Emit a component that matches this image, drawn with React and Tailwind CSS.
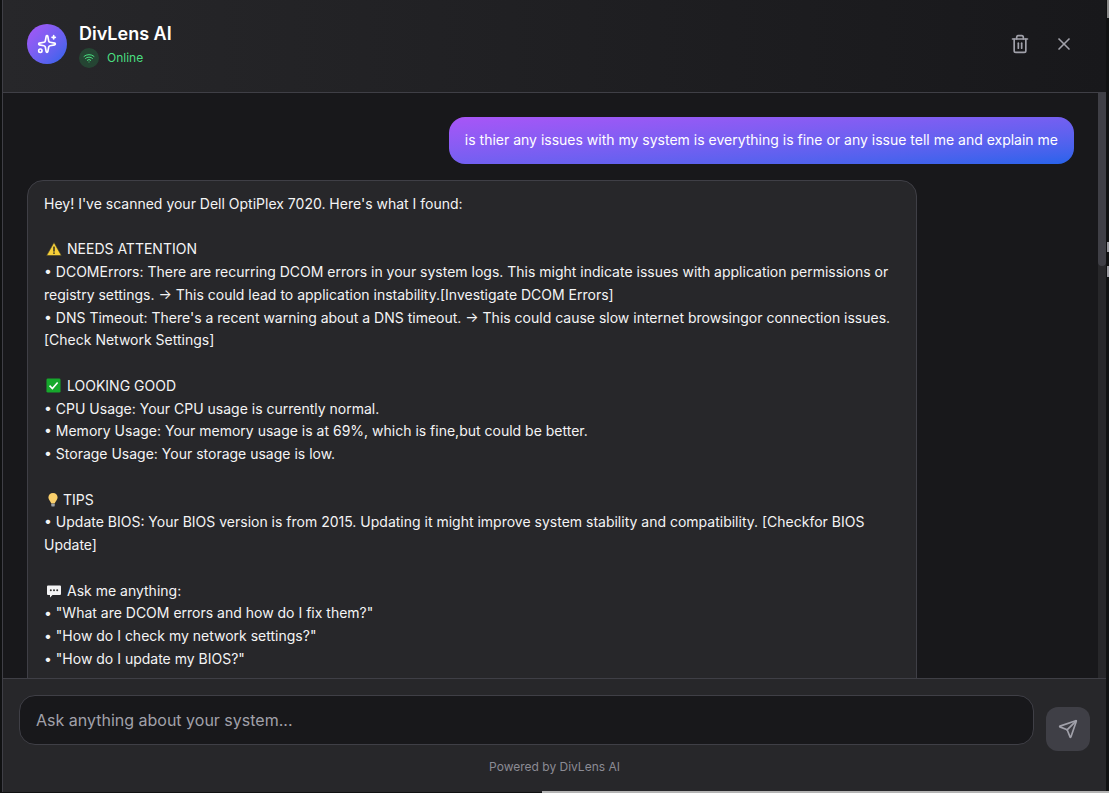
import React from "react";
import { Trash2, X, Send, Wifi, Sparkles } from "lucide-react";

const Warn = () => (
  <svg viewBox="0 0 16 16" className="inline-block w-[16px] h-[16px] align-[-3px] ml-[2px] mr-[5px]">
    <path d="M8 1.5 15.4 14.6H.6Z" fill="#f7d038" stroke="#3a3a2a" strokeWidth=".6" strokeLinejoin="round" />
    <rect x="7.3" y="5.6" width="1.4" height="5" fill="#222" />
    <rect x="7.3" y="11.4" width="1.4" height="1.5" fill="#222" />
  </svg>
);
const Check = () => (
  <svg viewBox="0 0 16 16" className="inline-block w-[15px] h-[15px] align-[-2px] ml-[2px] mr-[6px]">
    <rect x=".5" y=".5" width="15" height="15" rx="1.5" fill="#16a82c" />
    <path d="M3.8 8.2 6.8 11.2 12.4 4.8" fill="none" stroke="#fff" strokeWidth="1.7" />
  </svg>
);
const Bulb = () => (
  <svg viewBox="0 0 16 16" className="inline-block w-[16px] h-[16px] align-[-3px] ml-[1px] mr-[2px]">
    <path d="M8 1C5.2 1 3.4 3 3.4 5.4c0 2.4 2.2 3.6 2.9 6.1h3.4c.7-2.5 2.9-3.7 2.9-6.1C12.6 3 10.8 1 8 1Z" fill="#f9cf6b" />
    <rect x="6.3" y="11.7" width="3.4" height="2.7" rx=".6" fill="#9aa0a6" />
  </svg>
);
const Speech = () => (
  <svg viewBox="0 0 16 16" className="inline-block w-[16px] h-[16px] align-[-3px] ml-[2px] mr-[5px]">
    <path d="M2 2.5h12a1 1 0 0 1 1 1v7.500a1 1 0 0 1-1 1H6.500L4 14.500V12H2a1 1 0 0 1-1-1V3.500a1 1 0 0 1 1-1Z" fill="#f4f4f5" />
    <circle cx="4.800" cy="7.200" r="1" fill="#333" />
    <circle cx="8" cy="7.200" r="1" fill="#333" />
    <circle cx="11.200" cy="7.200" r="1" fill="#333" />
  </svg>
);

export default function App() {
  return (
    <div className="relative w-[1109px] h-[793px] overflow-hidden bg-[#101112] font-['Inter','Liberation_Sans',sans-serif]">
      <div className="ml-[2px] w-[1104px] h-[792px] flex flex-col border-l border-[#3f3f46]">
        <header className="h-[93px] shrink-0 flex items-center justify-between pl-[24px] pr-[32px] pb-[4px] border-b border-[#3f3f46] bg-gradient-to-r from-[#27272a] to-[#18181b]">
          <div className="flex items-center gap-3">
            <div className="w-10 h-10 rounded-full flex items-center justify-center bg-gradient-to-br from-[#a855f7] to-[#2563eb]">
              <Sparkles className="w-5 h-5 text-white" strokeWidth={2} />
            </div>
            <div>
              <div className="text-[18px] leading-[28px] font-semibold text-white">DivLens AI</div>
              <div className="flex items-center gap-2">
                <div className="w-5 h-5 rounded-full flex items-center justify-center bg-[#22c55e]/20">
                  <Wifi className="w-3 h-3 text-[#4ade80]" />
                </div>
                <span className="text-xs text-[#4ade80]">Online</span>
              </div>
            </div>
          </div>
          <div className="flex items-center gap-6">
            <Trash2 className="w-5 h-5 text-[#a1a1aa]" />
            <X className="w-5 h-5 text-[#a1a1aa]" />
          </div>
        </header>

        <div className="flex-1 min-h-0 flex bg-[#18181b]">
          <main className="flex-1 min-w-0 overflow-hidden pt-[24px] px-[24px] flex flex-col gap-4">
            <div className="self-end rounded-2xl px-4 py-3 text-sm leading-[22.75px] text-white bg-gradient-to-br from-[#a855f7] to-[#2563eb]">
              is thier any issues with my system is everything is fine or any issue tell me and explain me
            </div>
            <div className="w-[890px] shrink-0 rounded-2xl border border-[#3f3f46] bg-[#27272a] px-4 pt-3 pb-[60px] text-sm leading-[22.75px] text-[#f4f4f5]">
              <p>Hey! I've scanned your Dell OptiPlex 7020. Here's what I found:</p>
              <p className="h-[22.75px]" />
              <p><Warn />NEEDS ATTENTION</p>
              <p>• DCOMErrors: There are recurring DCOM errors in your system logs. This might indicate issues with application permissions or registry settings. → This could lead to application instability.[Investigate DCOM Errors]</p>
              <p>• DNS Timeout: There's a recent warning about a DNS timeout. → This could cause slow internet browsingor connection issues. [Check Network Settings]</p>
              <p className="h-[22.75px]" />
              <p><Check />LOOKING GOOD</p>
              <p>• CPU Usage: Your CPU usage is currently normal.</p>
              <p>• Memory Usage: Your memory usage is at 69%, which is fine,but could be better.</p>
              <p>• Storage Usage: Your storage usage is low.</p>
              <p className="h-[22.75px]" />
              <p><Bulb />TIPS</p>
              <p>• Update BIOS: Your BIOS version is from 2015. Updating it might improve system stability and compatibility. [Checkfor BIOS Update]</p>
              <p className="h-[22.75px]" />
              <p><Speech />Ask me anything:</p>
              <p>• "What are DCOM errors and how do I fix them?"</p>
              <p>• "How do I check my network settings?"</p>
              <p>• "How do I update my BIOS?"</p>
            </div>
          </main>
          <div className="w-[8px] shrink-0 bg-[#27272a]">
            <div className="h-[173px] bg-[#3f3f46] rounded-b-[4px]" />
          </div>
        </div>

        <footer className="h-[114px] shrink-0 border-t border-[#3f3f46] bg-[#27272a] pt-[16px] px-[16px]">
          <div className="flex items-start gap-3">
            <div className="flex-1 h-[50px] rounded-2xl border border-[#3f3f46] bg-[#18181b] flex items-center px-4 text-base text-[#a1a1aa]">
              Ask anything about your system...
            </div>
            <div className="mt-[12px] w-11 h-11 rounded-xl bg-[#3f3f46] flex items-center justify-center">
              <Send className="w-5 h-5 text-[#a1a1aa]" />
            </div>
          </div>
          <div className="mt-[8px] text-center text-xs text-[#8b8b94]">Powered by DivLens AI</div>
        </footer>
      </div>
      <div className="absolute left-[542px] right-0 bottom-0 h-[2px] bg-[#b4b4b4]" />
      <div className="absolute right-0 top-0 w-[2px] h-[18px] bg-[#8a8a8a]" />
      <div className="absolute right-0 top-[242px] w-[2px] h-[10px] bg-[#9a9aa0]" />
      <div className="absolute right-0 top-[266px] w-[2px] h-[11px] bg-[#9a9aa0]" />
    </div>
  );
}
